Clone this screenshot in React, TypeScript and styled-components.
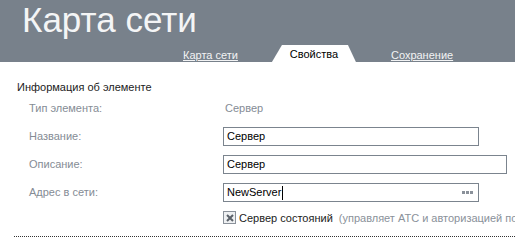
import React from 'react';
import styled, { createGlobalStyle } from 'styled-components';

const GlobalStyle = createGlobalStyle`
  html, body {
    margin: 0;
    padding: 0;
    background: #ffffff;
  }
  body {
    width: 515px;
    height: 244px;
    overflow: hidden;
    font: 11px "Liberation Sans", Arial, sans-serif;
  }
`;

const Header = styled.div`
  background: #78818b;
  height: 62px;
  padding-left: 22px;
  box-sizing: border-box;
  display: flex;
  flex-direction: column;
`;

const Title = styled.h1`
  margin: 0;
  font: 35px/40px "Liberation Sans", Arial, sans-serif;
  color: #f4f5f6;
  font-weight: normal;
`;

const Tabs = styled.div`
  display: flex;
  align-items: flex-end;
  height: 17px;
  margin-top: 5px;
  padding-left: 161px;
`;

const TabLink = styled.a`
  color: #f2f3f4;
  text-decoration: underline;
  font-size: 11px;
  line-height: 14px;
  margin-right: 34px;
  cursor: pointer;
`;

const ActiveTab = styled.div`
  width: 84px;
  height: 17px;
  margin-right: 35px;
  background: #ffffff;
  clip-path: polygon(10px 0, 76px 0, 84px 100%, 0 100%);
  color: #000000;
  text-align: center;
  font-size: 11px;
  line-height: 19px;
`;

const Body = styled.div`
  padding-left: 17px;
`;

const SectionTitle = styled.div`
  margin-top: 18px;
  line-height: 14px;
  color: #1b1b1b;
`;

const Rows = styled.div`
  display: flex;
  flex-direction: column;
  gap: 9px;
  margin-top: 5px;
  padding-left: 12px;
`;

const Row = styled.div`
  display: flex;
  align-items: center;
  height: 19px;
`;

const Label = styled.div`
  width: 194px;
  flex: none;
  color: #858c95;
  line-height: 19px;
`;

const Value = styled.div`
  color: #858c95;
  line-height: 19px;
  padding-left: 2px;
`;

const Field = styled.div<{ $width: number }>`
  width: ${p => p.$width}px;
  height: 19px;
  box-sizing: border-box;
  border: 1px solid #7b848e;
  padding: 0 3px;
  display: flex;
  align-items: center;
  color: #000000;
  line-height: 17px;
  background: #ffffff;
`;

const Caret = styled.span`
  display: inline-block;
  width: 1px;
  height: 14px;
  background: #000000;
  margin-left: 1px;
`;

const Dots = styled.span`
  margin-left: auto;
  margin-right: 2px;
  display: flex;
  gap: 1px;
  & > i {
    width: 3px;
    height: 3px;
    background: #8a919a;
  }
`;

const CheckRow = styled.div`
  display: flex;
  align-items: center;
  height: 13px;
  margin-top: 9px;
  padding-left: 206px;
  overflow: hidden;
`;

const Box = styled.span`
  width: 13px;
  height: 13px;
  box-sizing: border-box;
  border: 1px solid #8a919a;
  background: #eef0f2;
  display: flex;
  align-items: center;
  justify-content: center;
  flex: none;
`;

const CheckLabel = styled.span`
  margin-left: 3px;
  color: #1b1b1b;
  white-space: nowrap;
`;

const Hint = styled.span`
  margin-left: 6px;
  color: #8a919a;
  white-space: nowrap;
`;

const Divider = styled.div`
  margin-top: 12px;
  margin-left: -3px;
  border-top: 1px dotted #333333;
`;

export default function App() {
  return (
    <>
      <GlobalStyle />
      <Header>
        <Title>Карта сети</Title>
        <Tabs>
          <TabLink>Карта сети</TabLink>
          <ActiveTab>Свойства</ActiveTab>
          <TabLink>Сохранение</TabLink>
        </Tabs>
      </Header>
      <Body>
        <SectionTitle>Информация об элементе</SectionTitle>
        <Rows>
          <Row>
            <Label>Тип элемента:</Label>
            <Value>Сервер</Value>
          </Row>
          <Row>
            <Label>Название:</Label>
            <Field $width={256}>Сервер</Field>
          </Row>
          <Row>
            <Label>Описание:</Label>
            <Field $width={284}>Сервер</Field>
          </Row>
          <Row>
            <Label>Адрес в сети:</Label>
            <Field $width={256}>
              NewServer<Caret />
              <Dots><i /><i /><i /></Dots>
            </Field>
          </Row>
        </Rows>
        <CheckRow>
          <Box>
            <svg width="8" height="8" viewBox="0 0 8 8">
              <path d="M1 1L7 7M7 1L1 7" stroke="#5a6169" strokeWidth="2" />
            </svg>
          </Box>
          <CheckLabel>Сервер состояний</CheckLabel>
          <Hint>(управляет АТС и авторизацией пользователей)</Hint>
        </CheckRow>
        <Divider />
      </Body>
    </>
  );
}
